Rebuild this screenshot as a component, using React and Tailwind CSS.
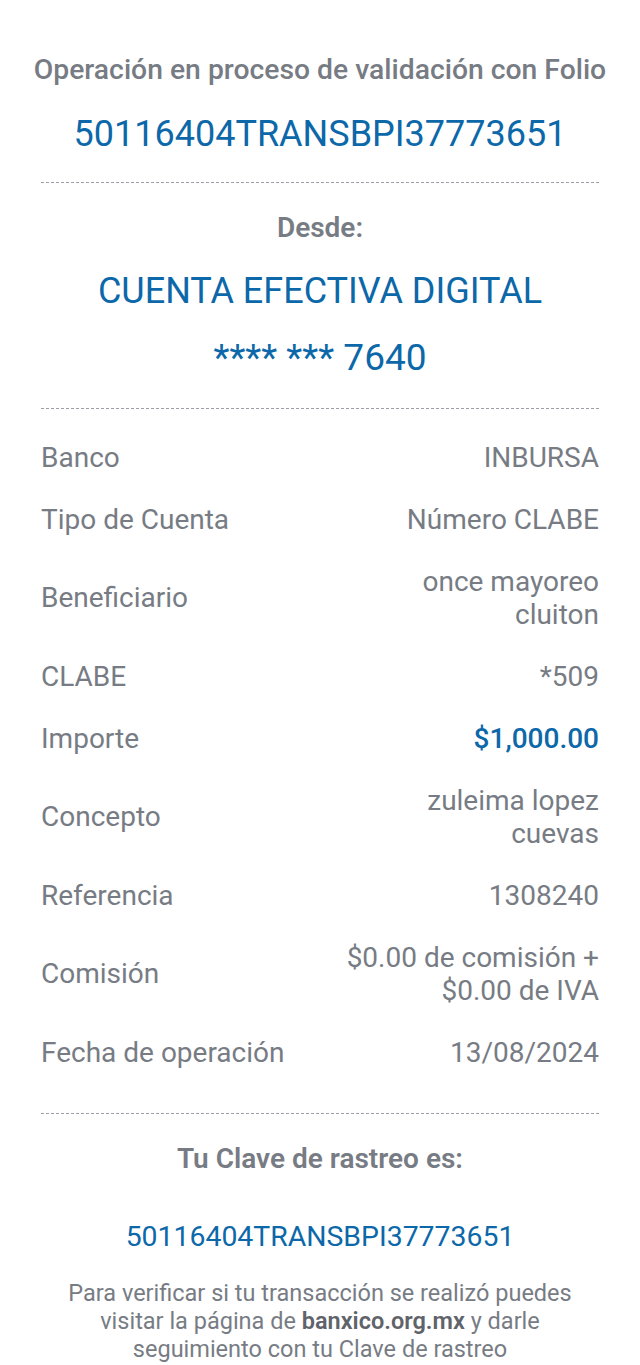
export default function App() {
  const rows = [
    ["Banco", "INBURSA"],
    ["Tipo de Cuenta", "Número CLABE"],
    ["Beneficiario", "once mayoreo cluiton"],
    ["CLABE", "*509"],
    ["Importe", "$1,000.00", true],
    ["Concepto", "zuleima lopez cuevas"],
    ["Referencia", "1308240"],
    ["Comisión", "$0.00 de comisión + $0.00 de IVA"],
    ["Fecha de operación", "13/08/2024"],
  ];

  return (
    <div className="min-h-[1365px] bg-white px-[41px] font-['Roboto',sans-serif] text-[#777c84]">
      <div className="pt-[52px] text-center">
        <p className="-mx-[41px] whitespace-nowrap text-[28.3px] font-medium leading-[36px]">Operación en proceso de validación con Folio</p>
        <p className="mt-[28px] text-[36px] leading-[36px] text-[#0c68a9]">50116404TRANSBPI37773651</p>
      </div>

      <div className="mt-[30px] border-t border-dashed border-[#9ca0a6]" />

      <div className="text-center">
        <p className="mt-[27px] text-[28px] font-semibold leading-[36px]">Desde:</p>
        <p className="mt-[27px] text-[36px] leading-[36px] text-[#0c68a9]">CUENTA EFECTIVA DIGITAL</p>
        <p className="mt-[31px] text-[37px] leading-[36px] text-[#0c68a9]">**** *** 7640</p>
      </div>

      <div className="mt-[32px] border-t border-dashed border-[#9ca0a6]" />

      <div className="mt-[17px]">
        {rows.map(([label, value, blue]) => (
          <div key={label} className="flex items-center justify-between py-[14.5px] text-[28px] leading-[33px]">
            <span>{label}</span>
            <span className={`max-w-[258px] text-right ${blue ? "font-medium text-[#0c68a9]" : ""}`}>{value}</span>
          </div>
        ))}
      </div>

      <div className="mt-[30px] border-t border-dashed border-[#9ca0a6]" />

      <div className="text-center">
        <p className="mt-[27px] text-[28px] font-semibold leading-[36px]">Tu Clave de rastreo es:</p>
        <p className="mt-[42px] text-[28.4px] leading-[36px] text-[#0c68a9]">50116404TRANSBPI37773651</p>
        <p className="mx-auto mt-[24px] max-w-[530px] text-[23.5px] leading-[28px]">
          Para verificar si tu transacción se realizó puedes visitar la página de{" "}
          <span className="font-semibold text-[#5f636a]">banxico.org.mx</span> y darle seguimiento con tu Clave de rastreo
        </p>
      </div>
    </div>
  );
}
